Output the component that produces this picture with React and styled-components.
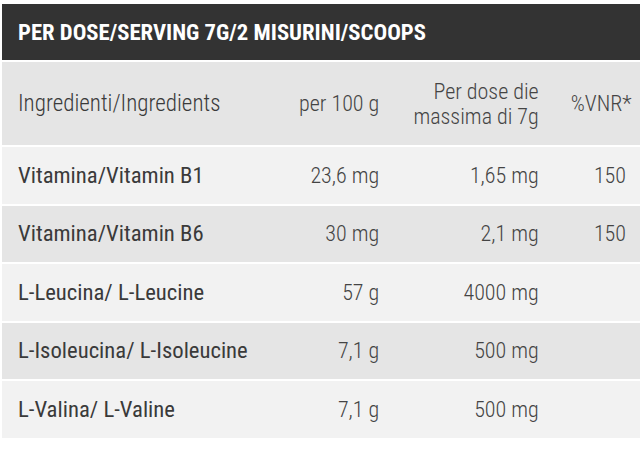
import React from 'react';
import styled, { createGlobalStyle } from 'styled-components';

const rows = [
  { name: 'Vitamina/Vitamin B1', per100: '23,6 mg', perDose: '1,65 mg', vnr: '150' },
  { name: 'Vitamina/Vitamin B6', per100: '30 mg', perDose: '2,1 mg', vnr: '150' },
  { name: 'L-Leucina/ L-Leucine', per100: '57 g', perDose: '4000 mg', vnr: '' },
  { name: 'L-Isoleucina/ L-Isoleucine', per100: '7,1 g', perDose: '500 mg', vnr: '' },
  { name: 'L-Valina/ L-Valine', per100: '7,1 g', perDose: '500 mg', vnr: '' },
];

const App = () => {
  return (
    <>
      <GlobalStyle />
      <Table>
        <colgroup>
          <col style={{ width: 258 }} />
          <col style={{ width: 134 }} />
          <col style={{ width: 159 }} />
          <col style={{ width: 87 }} />
        </colgroup>
        <thead>
          <tr>
            <Title colSpan={4}>PER DOSE/SERVING 7G/2 MISURINI/SCOOPS</Title>
          </tr>
        </thead>
        <tbody>
          <Row $shade="dark" $tall>
            <NameCell $light>Ingredienti/Ingredients</NameCell>
            <ValueCell>per 100 g</ValueCell>
            <ValueCell>Per dose die<br />massima di 7g</ValueCell>
            <ValueCell>%VNR*</ValueCell>
          </Row>
          {rows.map((r, i) => (
            <Row key={r.name} $shade={i % 2 === 0 ? 'light' : 'dark'}>
              <NameCell>{r.name}</NameCell>
              <ValueCell>{r.per100}</ValueCell>
              <ValueCell>{r.perDose}</ValueCell>
              <ValueCell>{r.vnr}</ValueCell>
            </Row>
          ))}
        </tbody>
      </Table>
    </>
  );
};

const GlobalStyle = createGlobalStyle`
  body {
    margin: 0;
    background: #fff;
    overflow: hidden;
    font-family: 'Roboto Condensed', Roboto, sans-serif;
  }
`
const Table = styled.table`
  width: 640px;
  margin: 2px 0 0 2px;
  table-layout: fixed;
  border-collapse: separate;
  border-spacing: 0 2px;
  font-stretch: condensed;
`
const Title = styled.th`
  height: 56px;
  padding: 0 16px;
  background: #333333;
  color: #ffffff;
  font-size: 22.7px;
  font-weight: 700;
  text-align: left;
  vertical-align: middle;
`
const Row = styled.tr`
  height: ${p => (p.$tall ? '83px' : '56.5px')};
  background: ${p => (p.$shade === 'dark' ? '#e5e5e5' : '#f2f2f2')};
`
const NameCell = styled.td`
  padding: 0 16px;
  color: ${p => (p.$light ? '#3a3a3a' : '#3a3a3a')};
  font-size: ${p => (p.$light ? '23px' : '22.7px')};
  font-weight: ${p => (p.$light ? 300 : 400)};
  text-align: left;
  vertical-align: middle;
  white-space: nowrap;
`
const ValueCell = styled.td`
  padding: 0 16px;
  color: #444444;
  font-size: 22px;
  font-weight: 300;
  line-height: 25px;
  text-align: right;
  vertical-align: middle;
  white-space: nowrap;
`

export default App;
